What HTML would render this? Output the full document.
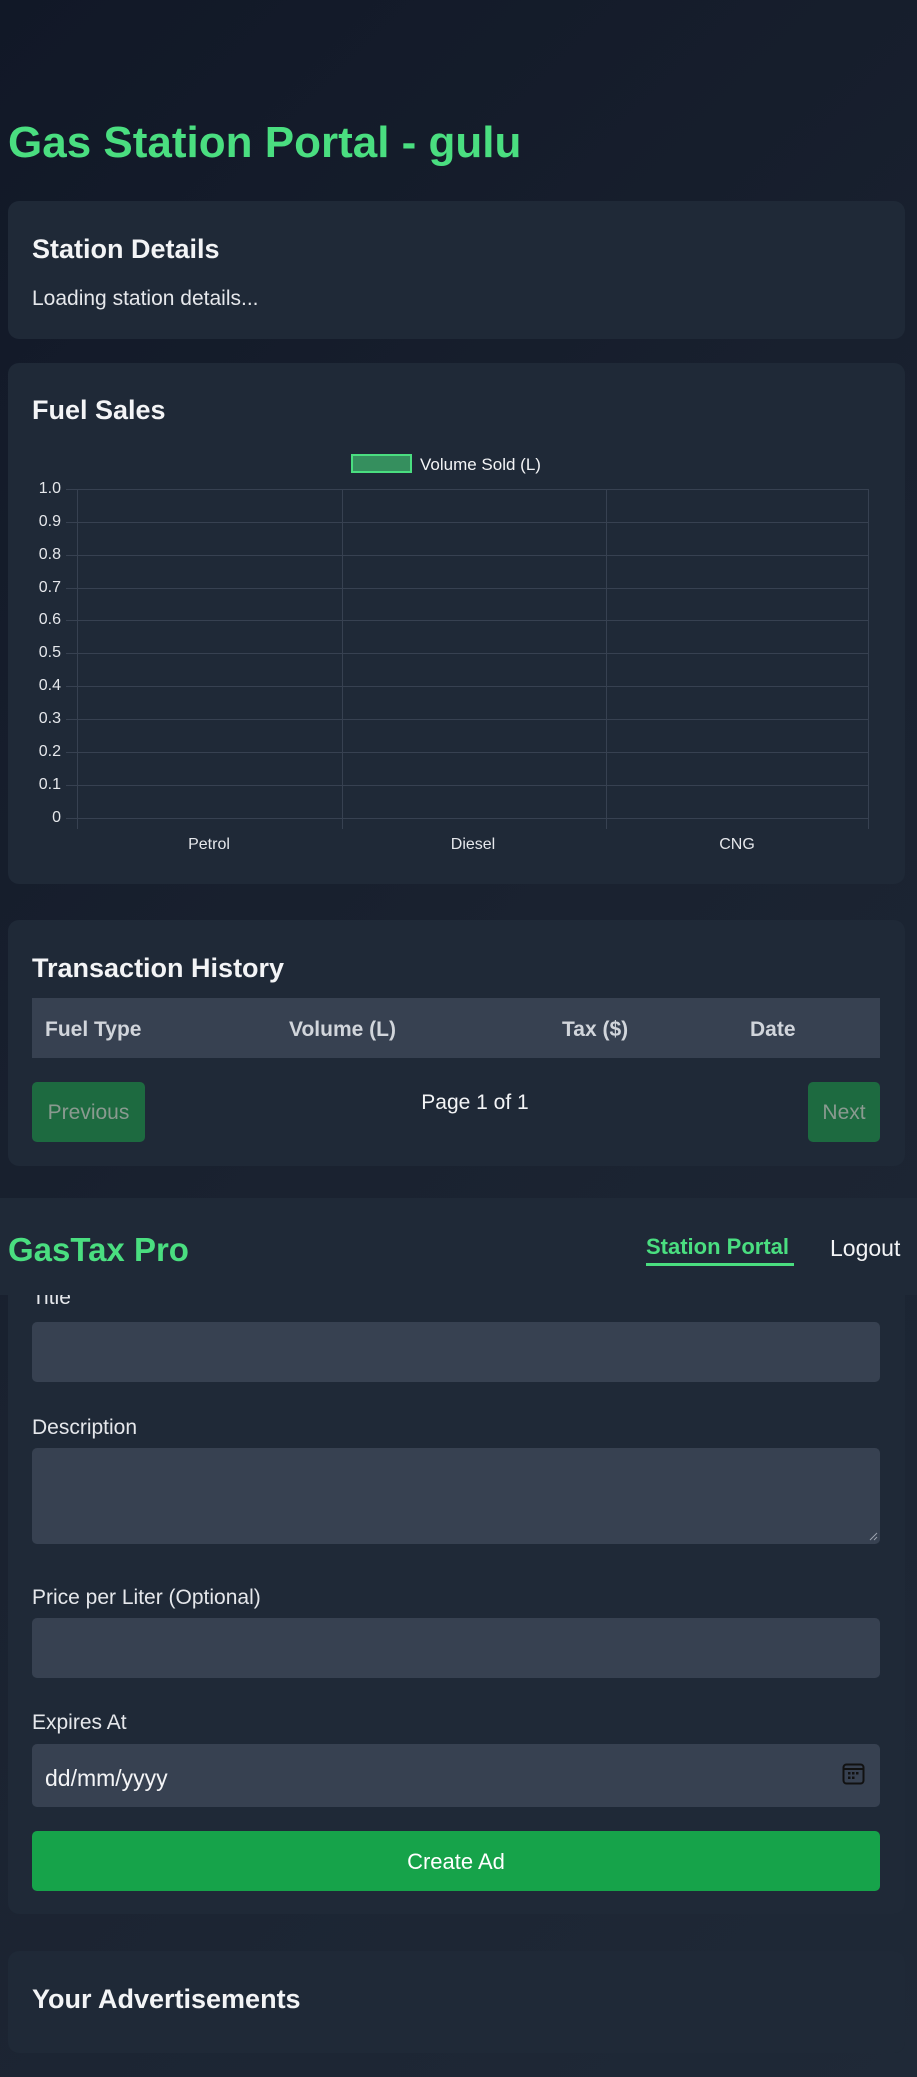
<!DOCTYPE html>
<html><head><meta charset="utf-8"><style>
*{margin:0;padding:0;box-sizing:border-box}
html,body{width:917px;height:2077px;overflow:hidden}
body{background:linear-gradient(135deg,#111827 0%,#1a2230 50%,#1f2937 100%);font-family:"Liberation Sans",sans-serif;color:#e5e7eb;position:relative}
.a{position:absolute;white-space:nowrap}
.card{position:absolute;left:8px;width:897px;background:#1f2937;border-radius:11px}
.h2{font-size:27px;font-weight:bold;color:#f3f4f6}
.lbl{font-size:21px;color:#e5e7eb}
.inp{position:absolute;left:32px;width:848px;background:#374151;border-radius:5px}
.gl{position:absolute;left:66px;width:802px;height:1px;background:#374151}
.vl{position:absolute;top:489px;height:340px;width:1px;background:#374151}
.yt{position:absolute;right:856px;font-size:16px;color:#e5e7eb;line-height:16px;text-align:right}
</style></head><body>
<div class="a" style="left:8px;top:118px;font-size:44px;font-weight:bold;color:#4ade80">Gas Station Portal - gulu</div>

<div class="card" style="top:201px;height:138px"></div>
<div class="a h2" style="left:32px;top:234px">Station Details</div>
<div class="a" style="left:32px;top:287px;font-size:21px">Loading station details...</div>

<div class="card" style="top:363px;height:521px"></div>
<div class="a h2" style="left:32px;top:395px">Fuel Sales</div>
<div class="a" style="left:351px;top:454px;width:61px;height:19px;background:#358f5e;border:2px solid #4ade80"></div>
<div class="a" style="left:420px;top:455px;font-size:17px;color:#f3f4f6">Volume Sold (L)</div>
<div class="gl" style="top:489px"></div><div class="gl" style="top:522px"></div><div class="gl" style="top:555px"></div><div class="gl" style="top:588px"></div><div class="gl" style="top:620px"></div><div class="gl" style="top:653px"></div><div class="gl" style="top:686px"></div><div class="gl" style="top:719px"></div><div class="gl" style="top:752px"></div><div class="gl" style="top:785px"></div><div class="gl" style="top:818px"></div>
<div class="vl" style="left:77px"></div><div class="vl" style="left:342px"></div><div class="vl" style="left:606px"></div><div class="vl" style="left:868px"></div>
<div class="yt" style="top:481px">1.0</div><div class="yt" style="top:514px">0.9</div><div class="yt" style="top:547px">0.8</div><div class="yt" style="top:580px">0.7</div><div class="yt" style="top:612px">0.6</div><div class="yt" style="top:645px">0.5</div><div class="yt" style="top:678px">0.4</div><div class="yt" style="top:711px">0.3</div><div class="yt" style="top:744px">0.2</div><div class="yt" style="top:777px">0.1</div><div class="yt" style="top:810px">0</div>
<div class="a" style="left:184px;top:836px;font-size:16px;width:50px;text-align:center">Petrol</div>
<div class="a" style="left:448px;top:836px;font-size:16px;width:50px;text-align:center">Diesel</div>
<div class="a" style="left:712px;top:836px;font-size:16px;width:50px;text-align:center">CNG</div>

<div class="card" style="top:920px;height:246px"></div>
<div class="a h2" style="left:32px;top:953px">Transaction History</div>
<div class="a" style="left:32px;top:998px;width:848px;height:60px;background:#374151"></div>
<div class="a" style="left:45px;top:1018px;font-size:21px;font-weight:bold;color:#d1d5db">Fuel Type</div>
<div class="a" style="left:289px;top:1018px;font-size:21px;font-weight:bold;color:#d1d5db">Volume (L)</div>
<div class="a" style="left:562px;top:1018px;font-size:21px;font-weight:bold;color:#d1d5db">Tax ($)</div>
<div class="a" style="left:750px;top:1018px;font-size:21px;font-weight:bold;color:#d1d5db">Date</div>
<div class="a" style="left:32px;top:1082px;width:113px;height:60px;background:#1d6a40;border-radius:5px;color:#8a9a90;font-size:21px;text-align:center;line-height:62px">Previous</div>
<div class="a" style="left:808px;top:1082px;width:72px;height:60px;background:#1d6a40;border-radius:5px;color:#8a9a90;font-size:21px;text-align:center;line-height:62px">Next</div>
<div class="a" style="left:380px;top:1091px;width:190px;text-align:center;font-size:21px;color:#f3f4f6">Page 1 of 1</div>

<div class="card" style="top:1250px;height:664px;border-radius:0 0 11px 11px"></div>
<div class="a lbl" style="left:32px;top:1286px">Title</div>
<div class="inp" style="top:1322px;height:60px"></div>
<div class="a lbl" style="left:32px;top:1416px">Description</div>
<div class="inp" style="top:1448px;height:96px"></div>
<svg class="a" style="left:868px;top:1531px" width="10" height="10"><path d="M9 2L2 9M9 6L6 9" stroke="#9ca3af" stroke-width="1"/></svg>
<div class="a lbl" style="left:32px;top:1586px">Price per Liter (Optional)</div>
<div class="inp" style="top:1618px;height:60px"></div>
<div class="a lbl" style="left:32px;top:1711px">Expires At</div>
<div class="inp" style="top:1744px;height:63px"></div>
<div class="a" style="left:45px;top:1765px;font-size:23px;color:#f3f4f6">dd/mm/yyyy</div>
<svg class="a" style="left:842px;top:1763px" width="23" height="22" viewBox="0 0 23 22"><rect x="1.5" y="1.5" width="20" height="19" rx="3" fill="none" stroke="#111" stroke-width="2"/><line x1="1.5" y1="6" x2="21.5" y2="6" stroke="#111" stroke-width="2"/><g fill="#111"><rect x="6" y="9" width="2.5" height="2.5"/><rect x="10" y="9" width="2.5" height="2.5"/><rect x="14" y="9" width="2.5" height="2.5"/><rect x="6" y="13.5" width="2.5" height="2.5"/><rect x="10" y="13.5" width="2.5" height="2.5"/></g></svg>
<div class="a" style="left:32px;top:1831px;width:848px;height:60px;background:#16a34a;border-radius:5px;color:#fff;font-size:22px;text-align:center;line-height:62px">Create Ad</div>

<div class="a" style="left:0;top:1198px;width:917px;height:97px;background:#1f2937"></div>
<div class="a" style="left:8px;top:1231px;font-size:33px;font-weight:bold;color:#4ade80">GasTax Pro</div>
<div class="a" style="left:646px;top:1234px;font-size:22px;font-weight:bold;color:#4ade80">Station Portal</div>
<div class="a" style="left:646px;top:1263px;width:148px;height:3px;background:#4ade80"></div>
<div class="a" style="left:830px;top:1235px;font-size:23px;color:#f3f4f6">Logout</div>

<div class="card" style="top:1951px;height:102px"></div>
<div class="a h2" style="left:32px;top:1984px">Your Advertisements</div>
</body></html>
